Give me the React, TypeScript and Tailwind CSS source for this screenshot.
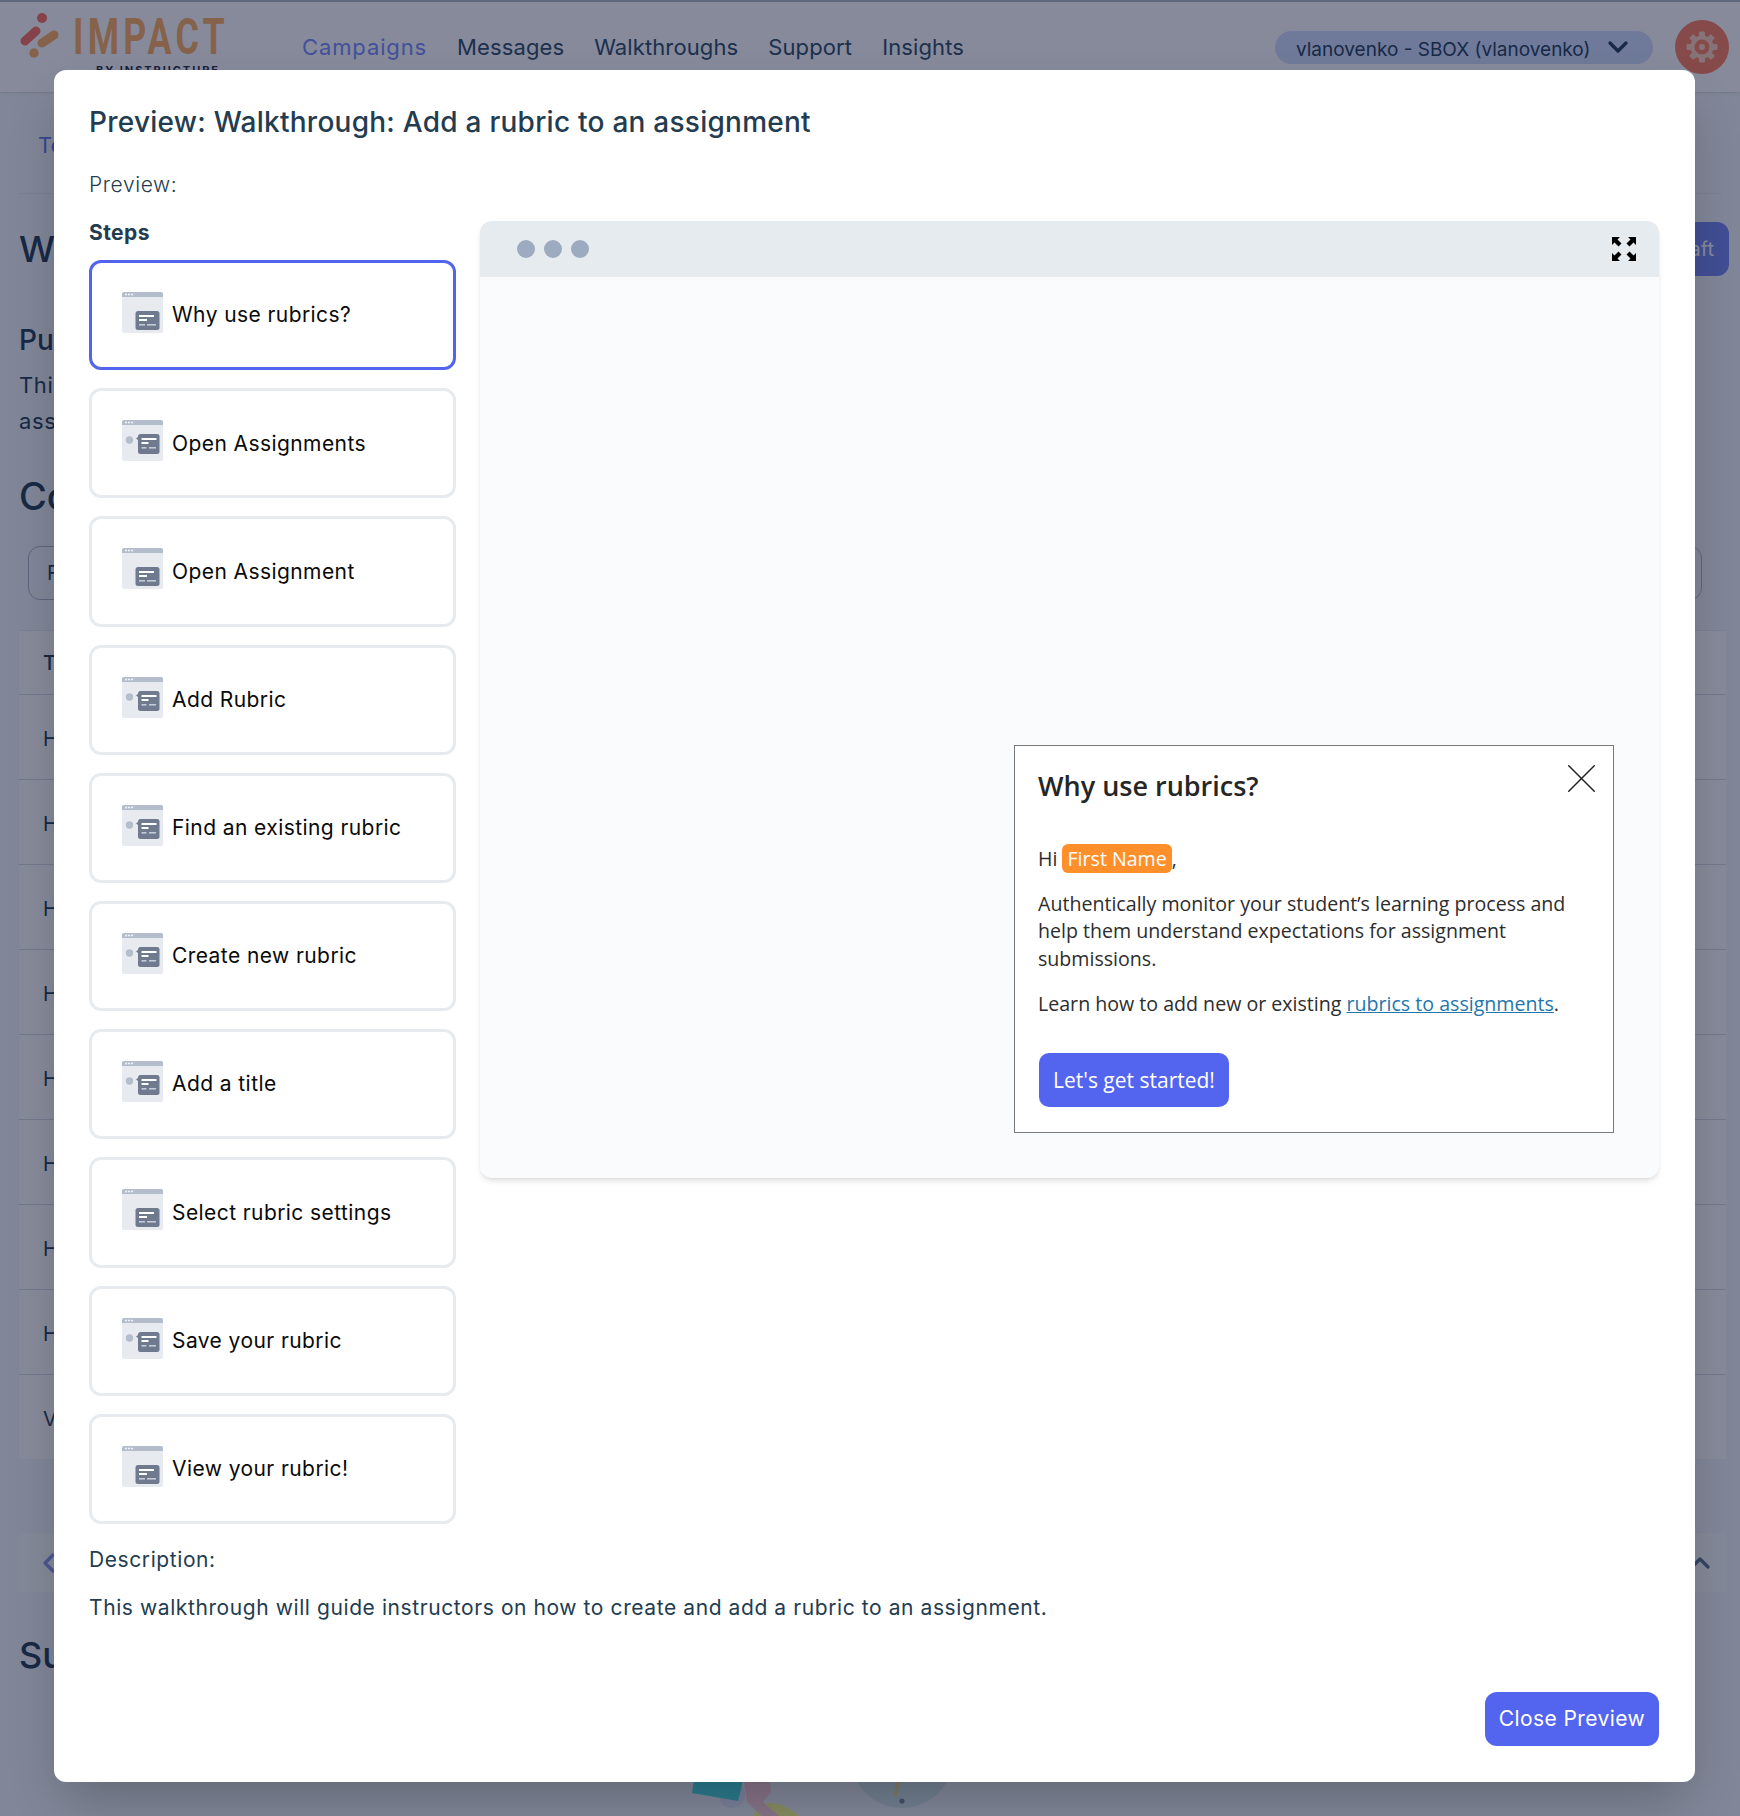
import { ChevronDown, ChevronLeft, ChevronUp, X } from "lucide-react"

const steps = [
  { name: "Why use rubrics?", pointer: false, active: true },
  { name: "Open Assignments", pointer: true },
  { name: "Open Assignment", pointer: false },
  { name: "Add Rubric", pointer: true },
  { name: "Find an existing rubric", pointer: true },
  { name: "Create new rubric", pointer: true },
  { name: "Add a title", pointer: true },
  { name: "Select rubric settings", pointer: false },
  { name: "Save your rubric", pointer: true },
  { name: "View your rubric!", pointer: false },
]

const navigation = ["Messages", "Walkthroughs", "Support", "Insights"]
const rows = ["How", "How", "How", "How", "How", "How", "How", "How", "View"]
const gearTeeth = [0, 45, 90, 135, 180, 225, 270, 315]

function Logo() {
  return (
    <svg width="210" height="72" viewBox="0 0 210 72" className="shrink-0">
      <circle cx="23" cy="7" r="5" fill="#FF6E60" />
      <line x1="6" y1="30" x2="17" y2="20" stroke="#FF6E60" strokeWidth="9" strokeLinecap="round" />
      <line x1="23" y1="32" x2="35" y2="24" stroke="#FFAF60" strokeWidth="9" strokeLinecap="round" />
      <circle cx="15" cy="42" r="4.7" fill="#FFAF60" />
      <text x="54" y="43" fontFamily="Roboto" fontSize="50.6" fontWeight="700" fill="#FFAF60" letterSpacing="6" textLength="156" lengthAdjust="spacingAndGlyphs">IMPACT</text>
      <text x="77" y="63" fontFamily="Inter" fontSize="11" fontWeight="700" fill="#1f2a44" textLength="122">BY INSTRUCTURE</text>
    </svg>
  )
}

function GearIcon() {
  return (
    <svg width="32" height="32" viewBox="-16 -16 32 32" fill="#FFD0B8">
      {gearTeeth.map((angle) => (
        <rect key={angle} x="-3" y="-15.5" width="6" height="5.5" rx="1" transform={`rotate(${angle})`} />
      ))}
      <circle r="9.5" fill="none" stroke="#FFD0B8" strokeWidth="4" />
      <circle r="3" />
    </svg>
  )
}

function StepIcon({ pointer }: { pointer: boolean }) {
  return (
    <svg width="41" height="41" viewBox="0 0 41 41" className="shrink-0 -mt-[5px]">
      <rect width="41" height="41" rx="2" fill="#E7EBF0" />
      <path d="M0 5V2a2 2 0 0 1 2-2h37a2 2 0 0 1 2 2v3z" fill="#B4BDCB" />
      <circle cx="4" cy="2.5" r="0.9" fill="#fff" />
      <circle cx="7" cy="2.5" r="0.9" fill="#fff" />
      <circle cx="10" cy="2.5" r="0.9" fill="#fff" />
      {pointer ? (
        <g>
          <circle cx="7.5" cy="20" r="3.7" fill="#B4BDCB" />
          <path d="M16 20l-2 -1.5 2-1.5z" fill="#6F7A8F" />
          <rect x="16" y="14" width="21.5" height="20" rx="2.5" fill="#6F7A8F" />
          <rect x="19.5" y="18" width="15" height="2" fill="#fff" />
          <rect x="19.5" y="22" width="7" height="2" fill="#fff" />
          <rect x="19.5" y="27" width="5" height="1.6" fill="#C3CAD6" />
          <rect x="27" y="27" width="7" height="1.6" fill="#C3CAD6" />
        </g>
      ) : (
        <g>
          <rect x="13.5" y="19" width="24" height="19" rx="2.5" fill="#6F7A8F" />
          <rect x="17" y="23" width="15" height="2" fill="#fff" />
          <rect x="17" y="27" width="8" height="2" fill="#fff" />
          <rect x="17" y="32" width="6" height="1.6" fill="#C3CAD6" />
          <rect x="25" y="32" width="9" height="1.6" fill="#C3CAD6" />
        </g>
      )}
    </svg>
  )
}

function ExpandIcon() {
  return (
    <svg width="24" height="24" viewBox="0 0 24 24" fill="#000">
      <path d="M0 0h8L5.5 2.5l4 4-3 3-4-4L0 8z" />
      <path d="M24 0h-8l2.5 2.5-4 4 3 3 4-4L24 8z" />
      <path d="M0 24h8l-2.5-2.5 4-4-3-3-4 4L0 16z" />
      <path d="M24 24h-8l2.5-2.5-4-4 3-3 4 4L24 16z" />
    </svg>
  )
}

// only the part below the modal is ever visible, y=0 is the modal's bottom edge
function Illustration() {
  return (
    <svg width="300" height="66" viewBox="0 -32 300 66" className="ml-[668px] shrink-0">
      <circle cx="45" cy="13" r="13" fill="#e6e6ff" />
      <path d="M8 -10L5 11 51 19 58 -10z" fill="#48E0E4" />
      <path d="M66 34C70 24 76 21 84 21 96 22 106 28 112 34z" fill="#ffff88" />
      <path d="M57 0h26l1 10-8 10 16 14H75L60 20z" fill="#FFD0D8" />
      <circle cx="215" cy="-26" r="52" fill="#d6e8ea" />
      <path d="M209 -2l4 0-3 16-3 0z" fill="#f5e28a" />
      <circle cx="215" cy="19" r="2.6" fill="#7a8fa3" />
    </svg>
  )
}

function BackgroundPage() {
  return (
    <div className="flex h-[1816px] flex-col overflow-hidden bg-[#F5F7FA] text-[#233c55]">
      <header className="flex h-[92px] shrink-0 items-center border-t-2 border-[#B0B8C4] bg-white pl-[19px] shadow-sm">
        <Logo />
        <nav className="ml-[73px] flex items-center gap-[30px] text-[22px] tracking-[0.005em]">
          <span className="tracking-[0.04em] text-[#748CFF]">Campaigns</span>
          {navigation.map((item) => (
            <span key={item} className="text-[#2d4a66]">{item}</span>
          ))}
        </nav>
        <div className="ml-auto flex h-[33px] w-[378px] items-center rounded-full bg-[#D0DEFF] pl-[21px] text-[19px]">
          <span className="mt-[7px]">vlanovenko - SBOX (vlanovenko)</span>
          <ChevronDown className="ml-[12px] h-8 w-8" strokeWidth={2.5} />
        </div>
        <div className="ml-[22px] mr-[11px] flex h-[54px] w-[54px] items-center justify-center rounded-full bg-[#FF7E5E]">
          <GearIcon />
        </div>
      </header>

      <main className="flex flex-1 flex-col px-[19px]">
        <div className="flex h-[102px] shrink-0 items-center border-b border-[#E7EBF0] pl-[19px] pt-[6px] text-[22px] text-[#5D78E8]">
          Templates
        </div>
        <div className="mt-[28px] flex h-[54px] shrink-0 items-center justify-between">
          <h1 className="text-[36px] font-medium">Walkthrough</h1>
          <button className="mr-[-8px] h-[54px] w-[190px] rounded-xl bg-[#7486F2] pr-[15px] text-right text-[20px] text-white">Save Draft</button>
        </div>
        <h2 className="mt-[46px] text-[28px] leading-[36px] font-medium">Purpose</h2>
        <p className="mt-[9px] text-[22px] leading-[36px] tracking-[0.03em]">This walkthrough<br />assignment</p>
        <h2 className="mt-[32px] text-[38px] leading-[50px] font-medium">Content</h2>
        <div className="ml-[9px] mr-[19px] mt-[25px] flex h-[54px] shrink-0 items-center rounded-xl border border-[#AAB4C2] pl-[18px] text-[20px]">
          Filter
        </div>
        <div className="mr-[-5px] mt-[30px] bg-white">
          <div className="flex h-[64px] items-center border-t border-[#E7EBF0] pl-[24px] text-[20px] font-medium">Title</div>
          {rows.map((row, i) => (
            <div key={i} className="flex h-[85px] items-center border-t border-[#D5DAE2] pl-[24px] pt-[3px] text-[20px]">
              {row}
            </div>
          ))}
        </div>
        <div className="mr-[-5px] mt-[74px] flex h-[59px] shrink-0 items-center justify-between bg-[#FBFCFD] pl-[14px] pr-[10px] text-[#8A97F0]">
          <ChevronLeft className="h-8 w-8" strokeWidth={2.5} />
          <ChevronUp className="h-8 w-8 text-[#5a7290]" strokeWidth={2.5} />
        </div>
        <h2 className="mt-[36px] text-[36px] leading-[54px] font-medium">Support</h2>
        <div className="mt-[68px] flex">
          <Illustration />
        </div>
      </main>
    </div>
  )
}

function TourPopup() {
  return (
    <div className="relative h-[388px] w-[600px] border border-[#7a7a7a] bg-white pl-[23px] pr-[24px] pt-[21px] font-['Open_Sans',sans-serif] text-[19.6px] leading-[27.5px] text-[#2d2d2d]">
      <button className="absolute right-[20px] top-[20px] flex h-6 w-6 items-center justify-center text-[#222]">
        <X className="-m-[13.5px] h-[51px] w-[51px] shrink-0" strokeWidth={0.7} />
      </button>
      <h3 className="mb-[40px] text-[27px] leading-[38px] font-semibold text-[#262626]">Why use rubrics?</h3>
      <p className="mb-[17px]">
        Hi <span className="rounded-[6px] bg-[#FF8F2B] px-[5px] py-[1px] text-white">First Name</span>,
      </p>
      <p className="mb-[18px]">
        Authentically monitor your student’s learning process and help them understand expectations for assignment submissions.
      </p>
      <p>
        Learn how to add new or existing <a className="text-[#1F77AB] underline">rubrics to assignments</a>.
      </p>
      <button className="ml-[1px] mt-[35px] h-[54px] w-[190px] rounded-[10px] bg-[#5365EE] pt-[2px] text-[21px] text-white">Let's get started!</button>
    </div>
  )
}

function PreviewModal() {
  return (
    <div className="absolute left-[54px] top-[70px] flex h-[1712px] w-[1641px] flex-col rounded-xl bg-white pl-[35px] pr-[36px] text-[#233c50] shadow-2xl">
      <h2 className="mt-[33px] text-[28px] leading-[38px] font-medium tracking-[0.009em]">Preview: Walkthrough: Add a rubric to an assignment</h2>
      <p className="mt-[29px] text-[21px] leading-[30px] font-light tracking-[0.028em]">Preview:</p>
      <div className="mt-[18px] flex gap-[24px]">
        <div className="w-[367px] shrink-0">
          <h3 className="mb-[12px] text-[21px] leading-[30px] font-bold tracking-[0.02em]">Steps</h3>
          {steps.map((step) => (
            <div
              key={step.name}
              className={
                step.active
                  ? "mb-[18px] flex h-[110.2px] items-center gap-[9px] rounded-xl border-[3px] border-[#5365EE] pl-[30px] text-[21px] tracking-[0.02em] text-[#0a0a0a]"
                  : "mb-[18px] flex h-[110.2px] items-center gap-[9px] rounded-xl border-[3px] border-[#E7EBF0] pl-[30px] text-[21px] tracking-[0.02em] text-[#0a0a0a]"
              }
            >
              <StepIcon pointer={step.pointer} />
              {step.name}
            </div>
          ))}
        </div>
        <div className="mt-[3px] flex h-[957px] flex-1 flex-col overflow-hidden rounded-xl bg-[#FAFBFD] shadow-md">
          <div className="flex h-[56px] shrink-0 items-center justify-between bg-[#E6EBEF] pl-[37px] pr-[23px]">
            <div className="flex gap-[9px]">
              <span className="h-[18px] w-[18px] rounded-full bg-[#9CABBF]" />
              <span className="h-[18px] w-[18px] rounded-full bg-[#9CABBF]" />
              <span className="h-[18px] w-[18px] rounded-full bg-[#9CABBF]" />
            </div>
            <ExpandIcon />
          </div>
          <div className="flex flex-1 items-end justify-end pb-[45px] pr-[45px]">
            <TourPopup />
          </div>
        </div>
      </div>
      <p className="mt-[3px] text-[21px] leading-[30px] tracking-[0.028em]">Description:</p>
      <p className="mt-[18px] text-[21px] leading-[30px] tracking-[0.028em]">
        This walkthrough will guide instructors on how to create and add a rubric to an assignment.
      </p>
      <div className="mb-[36px] mt-auto flex justify-end">
        <button className="h-[54px] w-[174px] rounded-xl bg-[#5365EE] text-[21px] tracking-[0.02em] text-white">Close Preview</button>
      </div>
    </div>
  )
}

export default function App() {
  return (
    <div className="relative h-[1816px] w-[1740px] overflow-hidden font-['Inter',sans-serif]">
      <BackgroundPage />
      <div className="absolute inset-0 bg-[#0e1636]/50" />
      <PreviewModal />
    </div>
  )
}
